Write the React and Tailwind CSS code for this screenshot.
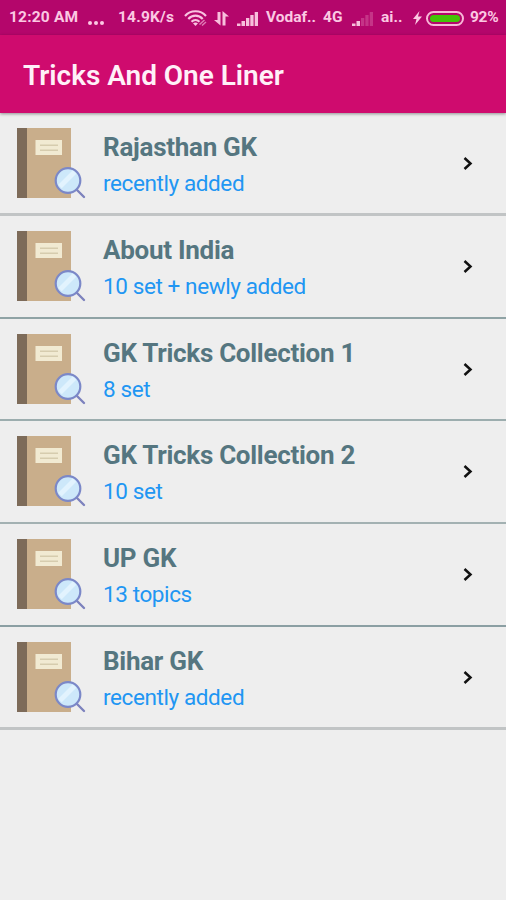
import React from 'react';

const topics = [
  { title: 'Rajasthan GK', note: 'recently added', line: 'h-[3px] bg-[#c1c4c5]' },
  { title: 'About India', note: '10 set + newly added', line: 'h-[2px] bg-[#8fa3a5]' },
  { title: 'GK Tricks Collection 1', note: '8 set', line: 'h-[2px] bg-[#9cadae]' },
  { title: 'GK Tricks Collection 2', note: '10 set', line: 'h-[2px] bg-[#a3b1b2]' },
  { title: 'UP GK', note: '13 topics', line: 'h-[2px] bg-[#8b9fa3]' },
  { title: 'Bihar GK', note: 'recently added', line: 'h-[3px] bg-[#c1c4c5]' },
];

function BookIcon() {
  return (
    <svg className="block h-[72px] w-[70px] shrink-0" viewBox="0 0 70 72" fill="none">
      <path d="M0 0h54v70H0z" fill="#c9ae8b" />
      <path d="M0 0h10v70H0z" fill="#7d6b59" />
      <path d="M18.5 12H45v15H18.5z" fill="#f1ead2" />
      <path d="M23 17.2h18M23 22.2h18" stroke="#d6ccae" strokeWidth="1.4" />
      <path d="M60 62l7 7" stroke="#7d82bd" strokeWidth="2.4" strokeLinecap="round" />
      <circle cx="51" cy="52.5" r="12.3" fill="#cde8fa" />
      <path d="M43 58.5L57.500 44" stroke="#e2f3fe" strokeWidth="5" />
      <circle cx="51" cy="52.5" r="12.3" stroke="#7b88c8" strokeWidth="2.2" />
    </svg>
  );
}

function WifiIcon() {
  return (
    <svg className="block h-4 w-6" viewBox="0 0 24 16" fill="none" stroke="#f9c3e0" strokeWidth="2.1">
      <path d="M1 6C6.5-.3 16.5-.3 22 6M4.3 9c4-4.5 10.4-4.5 14.4 0M7.5 11.8c2.4-2.5 5.600-2.5 8 0" />
      <path d="M9 13.2L11.5 16l2.5-2.8c-1.5-1-3.5-1-5 0z" fill="#f9c3e0" stroke="none" />
      <path d="M15.5 14.500l5-4.500M18 15.500l4-3.500" stroke="#df7ab5" strokeWidth="1.5" />
    </svg>
  );
}

function SignalIcon({ weak }) {
  return (
    <svg className="block h-[15px] w-[21px]" viewBox="0 0 21 15" fill="#f7bfdc">
      <path d="M0 12.5h3.5V15H0zM4.5 10H8v5H4.5z" />
      <path d="M9 7h3.3v8H9zM13.3 4h3.3v11h-3.3zM17.7 1H21v14h-3.3z" opacity={weak ? 0.25 : 1} />
    </svg>
  );
}

function StatusBar() {
  return (
    <div className="flex h-[35px] items-center bg-[#b4066b] pt-px pl-[9px] text-[15.5px] font-bold whitespace-nowrap text-[#fbc9e3]">
      <span className="w-[79px] tracking-[0.2px]">12:20 AM</span>
      <span className="flex w-[30px] gap-[2px] pt-[9px]">
        <i className="size-[4px] rounded-full bg-[#fbc9e3]" />
        <i className="size-[4px] rounded-full bg-[#fbc9e3]" />
        <i className="size-[4px] rounded-full bg-[#fbc9e3]" />
      </span>
      <span className="w-[66px] tracking-[0.2px]">14.9K/s</span>
      <span className="w-[30px]"><WifiIcon /></span>
      <svg className="mr-[8px] block h-[15px] w-[15px]" viewBox="0 0 15 15" fill="#f7bfdc">
        <path d="M3.5 1h3v13.5L0 9h3.500zM8.500 14.500V0L15 5.500h-3.500v9z" />
      </svg>
      <span className="w-[29px]"><SignalIcon /></span>
      <span className="w-[57px]">Vodaf..</span>
      <span className="w-[29px]">4G</span>
      <span className="w-[29px]"><SignalIcon weak /></span>
      <span className="w-[32px]">ai..</span>
      <svg className="mr-[4px] block h-[14px] w-[9px]" viewBox="0 0 9 14" fill="#fbc9e3">
        <path d="M6.5 0L0 8h3.500L2 14l7-8.500H5z" />
      </svg>
      <span className="mr-[6px] h-[15px] w-[38px] rounded-full border-2 border-[#f8b8d8] p-[2px]">
        <span className="block h-[7px] rounded-full bg-[#43c307]" />
      </span>
      <span className="tracking-[-0.3px]">92%</span>
    </div>
  );
}

export default function App() {
  return (
    <div className="h-[900px] w-[506px] overflow-hidden bg-[#eeeeee] font-[Roboto,sans-serif]">
      <StatusBar />
      <header className="relative flex h-[78px] items-center bg-[#cf0b6e] pl-[23px] pt-[4px] shadow-[0_1px_3px_rgba(0,0,0,0.4)]">
        <h1 className="text-[28px] font-semibold tracking-[-0.02px] text-[#fff0f8]">Tricks And One Liner</h1>
      </header>

      <ul className="pt-[0.4px]">
        {topics.map((topic) => (
          <li key={topic.title} className="flex h-[102.7px] flex-col">
            <div className="flex grow items-start pl-[17px] pt-[15px]">
              <BookIcon />
              <div className="ml-[16px] grow">
                <h2 className="mt-[2px] text-[26px] leading-[34px] font-bold tracking-[-0.28px] text-[#557680]">{topic.title}</h2>
                <p className="mt-[4px] text-[22.5px] leading-[30px] tracking-[-0.4px] text-[#2196f3]">{topic.note}</p>
              </div>
              <svg className="mt-[29px] mr-[33px] block h-[13px] w-[10px]" viewBox="0 0 10 13" fill="none" stroke="#111" strokeWidth="2.5">
                <path d="M1.5 1l6 5.5-6 5.5" />
              </svg>
            </div>
            <div className={topic.line} />
          </li>
        ))}
      </ul>
    </div>
  );
}
